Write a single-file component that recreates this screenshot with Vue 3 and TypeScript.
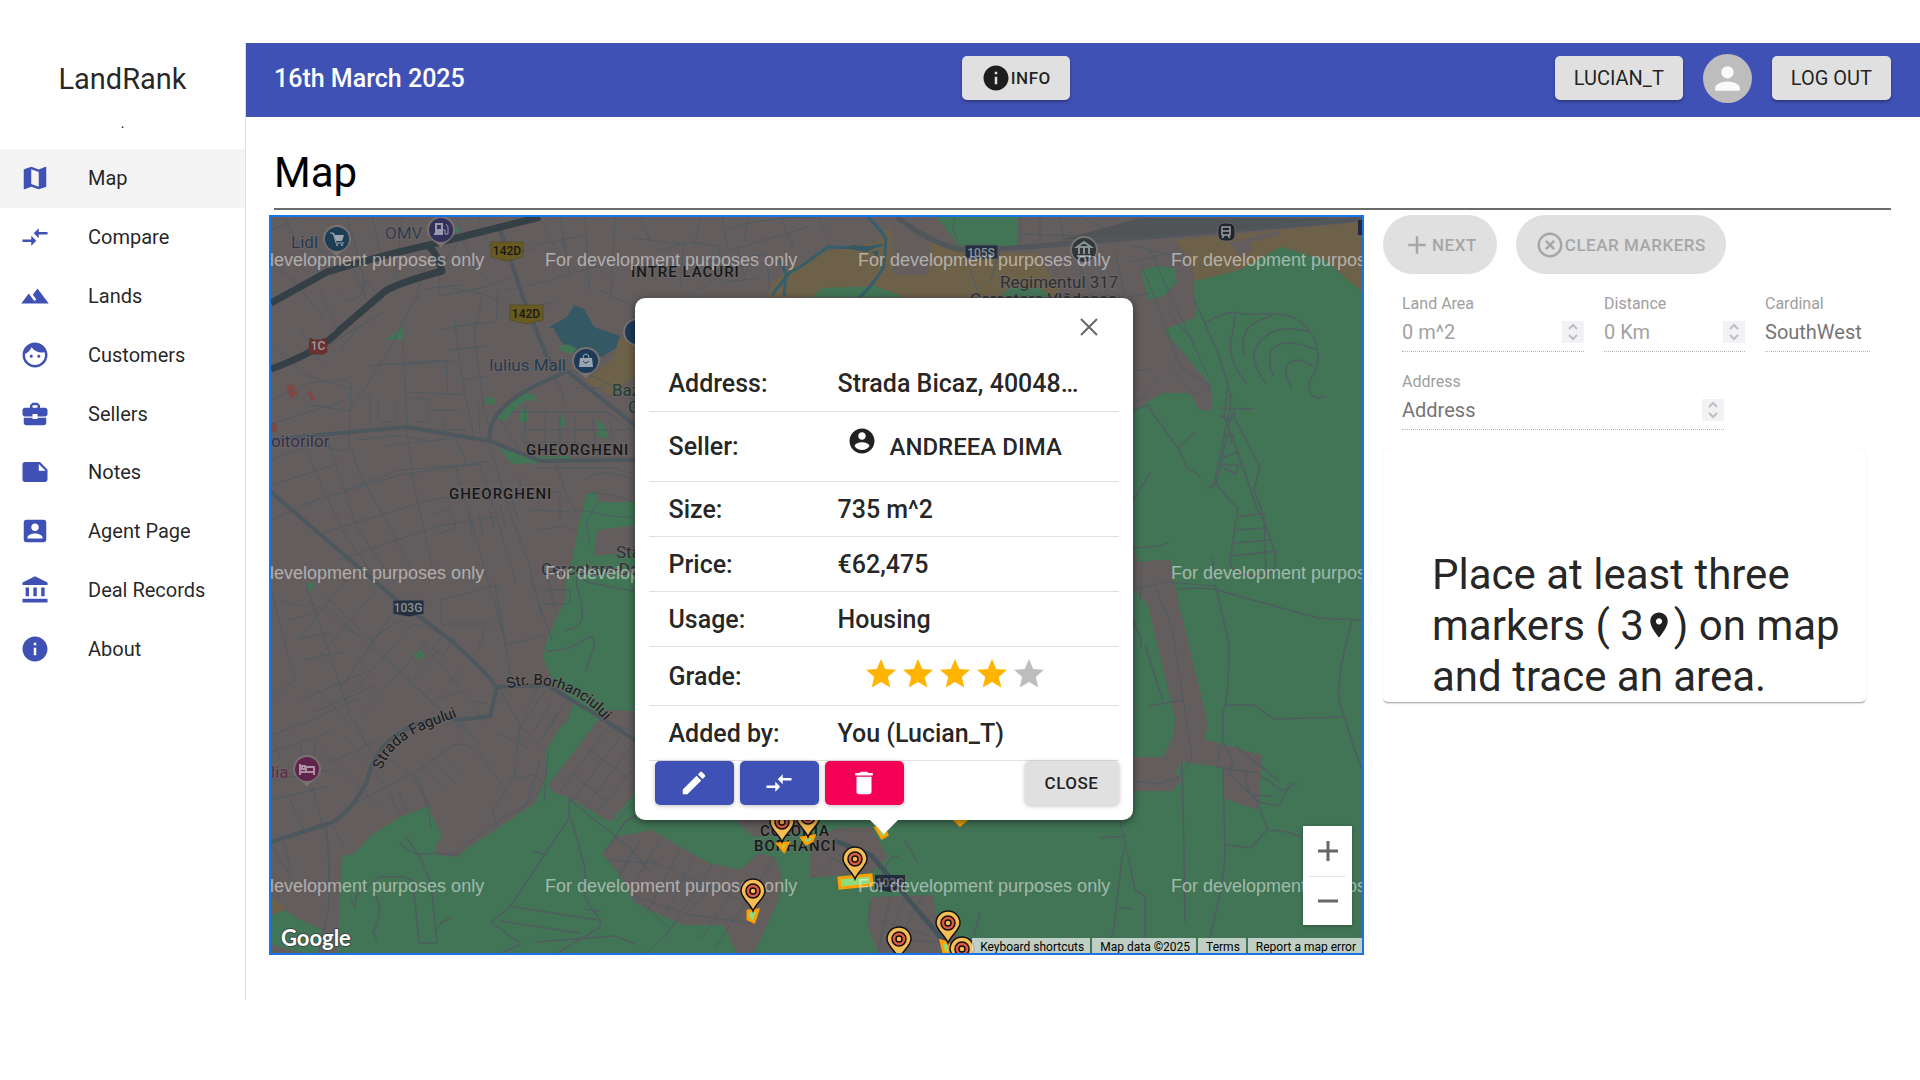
<script setup lang="ts">
interface NavItem { label: string; icon: string; active?: boolean }
interface Point { x: number; y: number }

const icons: Record<string, string> = {
  map: 'M20.5 3l-.16.03L15 5.1 9 3 3.36 4.9c-.21.07-.36.25-.36.48V20.5c0 .28.22.5.5.5l.16-.03L9 18.9l6 2.1 5.64-1.9c.21-.07.36-.25.36-.48V3.5c0-.28-.22-.5-.5-.5zM15 19l-6-2.11V5l6 2.11V19z',
  compare: 'M9.01 14H2v2h7.01v3L13 15l-3.99-4v3zm5.98-1v-3H22V8h-7.01V5L11 9l3.99 4z',
  lands: 'M14 6l-3.75 5 2.85 3.8-1.6 1.2C9.81 13.75 7 10 7 10l-6 8h22L14 6z',
  face: 'M9 11.75c-.69 0-1.25.56-1.25 1.25s.56 1.25 1.25 1.25 1.25-.56 1.25-1.25-.56-1.25-1.25-1.25zm6 0c-.69 0-1.25.56-1.25 1.25s.56 1.25 1.25 1.25 1.25-.56 1.25-1.25-.56-1.25-1.25-1.25zM12 2C6.48 2 2 6.48 2 12s4.48 10 10 10 10-4.48 10-10S17.52 2 12 2zm0 18c-4.41 0-8-3.59-8-8 0-.29.02-.58.05-.86 2.36-1.05 4.23-2.98 5.21-5.37C11.07 8.33 14.05 10 17.42 10c.78 0 1.53-.09 2.25-.26.21.71.33 1.47.33 2.26 0 4.41-3.59 8-8 8z',
  briefcase: 'M10 16v-1H3.01L3 19c0 1.11.89 2 2 2h14c1.11 0 2-.89 2-2v-4h-7v1h-4zm10-9h-4.01V5l-2-2h-4l-2 2v2H4c-1.1 0-2 .9-2 2v3c0 1.11.89 2 2 2h6v-2h4v2h6c1.1 0 2-.9 2-2V9c0-1.1-.9-2-2-2zm-6 0h-4V5h4v2z',
  note: 'M22 10l-6-6H4c-1.1 0-2 .9-2 2v12.01c0 1.1.9 1.99 2 1.99l16-.01c1.1 0 2-.89 2-1.99v-8zm-7-4.5l5.5 5.5H15V5.5z',
  accountBox: 'M3 5v14c0 1.1.89 2 2 2h14c1.1 0 2-.9 2-2V5c0-1.1-.9-2-2-2H5c-1.11 0-2 .9-2 2zm12 4c0 1.66-1.34 3-3 3s-3-1.34-3-3 1.34-3 3-3 3 1.34 3 3zm-9 8c0-2 4-3.1 6-3.1s6 1.1 6 3.1v1H6v-1z',
  bank: 'M4.5 10v7h2.7v-7zm6.2 0v7h2.7v-7zM2 22h20v-3H2v3zM17 10v7h2.700v-7zM12 1L2 6v2h20V6z',
  info: 'M12 2C6.48 2 2 6.48 2 12s4.48 10 10 10 10-4.48 10-10S17.52 2 12 2zm1 15h-2v-6h2v6zm0-8h-2V7h2v2z',
  person: 'M12 12c2.21 0 4-1.79 4-4s-1.79-4-4-4-4 1.79-4 4 1.79 4 4 4zm0 2c-2.67 0-8 1.34-8 4v2h16v-2c0-2.66-5.33-4-8-4z',
  account: 'M12 2C6.48 2 2 6.48 2 12s4.480 10 10 10 10-4.480 10-10S17.52 2 12 2zm0 3c1.66 0 3 1.34 3 3s-1.34 3-3 3-3-1.34-3-3 1.34-3 3-3zm0 14.2c-2.5 0-4.71-1.28-6-3.22.03-1.99 4-3.08 6-3.08 1.99 0 5.97 1.09 6 3.08-1.29 1.94-3.5 3.22-6 3.22z',
  edit: 'M3 17.25V21h3.75L17.81 9.94l-3.75-3.75L3 17.25zM20.71 7.04c.39-.39.39-1.02 0-1.41l-2.34-2.34c-.39-.39-1.02-.39-1.41 0l-1.83 1.83 3.75 3.75 1.83-1.83z',
  trash: 'M6 19c0 1.1.9 2 2 2h8c1.1 0 2-.9 2-2V7H6v12zM19 4h-3.5l-1-1h-5l-1 1H5v2h14V4z',
  star: 'M12 17.27L18.18 21l-1.64-7.03L22 9.24l-7.19-.61L12 2 9.19 8.63 2 9.24l5.46 4.73L5.82 21z',
  place: 'M12 2C8.13 2 5 5.13 5 9c0 5.25 7 13 7 13s7-7.75 7-13c0-3.87-3.13-7-7-7zm0 9.5c-1.38 0-2.5-1.12-2.5-2.5s1.12-2.5 2.5-2.5 2.5 1.12 2.5 2.5-1.12 2.5-2.5 2.5z',
  add: 'M19 13h-6v6h-2v-6H5v-2h6V5h2v6h6v2z',
  clear: 'M14.59 8L12 10.59 9.41 8 8 9.41 10.59 12 8 14.59 9.41 16 12 13.41 14.59 16 16 14.59 13.41 12 16 9.41 14.59 8zM12 2C6.47 2 2 6.47 2 12s4.47 10 10 10 10-4.47 10-10S17.53 2 12 2zm0 18c-4.41 0-8-3.59-8-8s3.59-8 8-8 8 3.59 8 8-3.59 8-8 8z',
}

const nav: NavItem[] = [
  { label: 'Map', icon: 'map', active: true },
  { label: 'Compare', icon: 'compare' },
  { label: 'Lands', icon: 'lands' },
  { label: 'Customers', icon: 'face' },
  { label: 'Sellers', icon: 'briefcase' },
  { label: 'Notes', icon: 'note' },
  { label: 'Agent Page', icon: 'accountBox' },
  { label: 'Deal Records', icon: 'bank' },
  { label: 'About', icon: 'info' },
]

const grade = 4

const watermarks: Point[] = [266, 579, 892].flatMap((y) => [232, 545, 858, 1171].map((x) => ({ x, y })))

const pins: Point[] = [
  { x: 808, y: 817 },
  { x: 782, y: 822 },
  { x: 855, y: 859 },
  { x: 753, y: 891 },
  { x: 899, y: 939 },
  { x: 948, y: 923 },
  { x: 962, y: 949 },
]

const parcels: string[] = [
  '839,878 871,875 872,885 840,888',
  '748,911 758,910 754,922 748,919',
  '778,844 788,843 784,851',
  '802,838 814,836 812,841 806,844',
  '876,828 884,828 887,835 882,838',
  '955,820 966,820 960,825',
  '941,941 948,943 951,953 944,953',
]

const greens: string[] = [
  '342,857 355,853 371,835 400,817 428,806 433,818 442,835 435,848 437,855 457,857 468,848 535,803 546,777 545,752 562,725 567,723 574,702 553,680 543,658 548,637 565,600 567,570 572,562 578,528 583,507 587,493 597,492 598,502 660,502 1100,440 1133,410 1163,393 1190,393 1199,409 1212,411 1212,387 1164,330 1196,317 1194,281 1240,270 1281,247 1325,260 1362,292 1362,953 337,953 340,900',
  '271,916 285,910 300,920 322,929 318,953 300,953 271,944',
  '937,217 1018,217 1017,247 958,245',
  '812,297 822,288 875,286 905,297',
  '1141,270 1160,266 1175,268 1177,282 1164,296 1148,300',
  '386,340 403,327 403,339',
  '485,398 494,397 495,404 486,405',
  '497,418 510,404 525,392 535,396 523,402 510,414 506,421',
  '526,395 536,395 535,401 526,400',
  '520,410 528,409 528,422 520,422',
  '560,413 565,420 566,428 560,426',
  '598,420 606,427 607,438 598,437',
  '499,447 512,452 530,457 570,456 568,462 512,464',
  '306,582 316,584 309,593',
  '413,655 419,649 425,655 419,661',
  '998,297 1010,288 1040,288 1050,297',
  '450,228 462,228 460,232 450,233',
]

const builtUp: string[] = [
  '597,530 640,525 640,552 594,556',
  '605,710 660,712 700,780 635,793 610,822 568,797 553,792 548,785 600,718',
  '615,837 652,830 668,840 709,863 740,870 759,853 775,857 781,873 780,897 754,953 737,953 723,925 683,925 635,903 620,875 602,853',
  '730,815 800,815 800,832 754,837',
  '809,878 812,840 837,828 871,827 888,857 871,873',
  '871,897 933,895 936,913 974,953 878,953 868,927',
  '1133,547 1138,562 1170,559 1178,600 1200,690 1208,725 1204,739 1262,755 1258,810 1223,798 1223,767 1182,762 1175,772 1182,780 1172,791 1130,791 1130,757 1163,757 1173,737 1175,718 1148,605 1137,593 1130,590',
  '271,948 303,952 303,953 271,953',
]

const fields: string[] = [
  '892,225 876,242 823,252 790,268 773,282 768,297 1063,297 1037,253 963,252 930,242 928,275 893,275',
  '1175,240 1362,222 1362,292 1325,260 1281,247 1240,270 1194,281 1192,262',
  '585,381 612,360 620,338 636,330 636,375 610,395',
  '271,896 285,908 271,916',
]

/* Residential streets, grouped by city quarter */
const streets: string[] = [
  'M271 230L300 217M285 217l14 30 22 28M300 240l28 14M346 217l12 38M372 217l8 34M402 217l-3 32M455 217l6 12M478 217l12 30M560 217l10 60M585 217l4 74M615 217l-4 78',
  'M271 262l24 20 28 36M283 300l40-24M320 292l17 36M350 262l20 44M365 280l18 22M395 262l2 22M358 262q12 24 2 34t-22-4',
  'M460 240l-20 28-2 28 44-8 26-10M417 300q4-12 16-12l28-3M450 288l33 6 24 10M462 240l14 28 22 24-2 30-42 4M425 268l-10 32-13 22-8 20-26 42-18 25',
  'M508 290q40-8 60-16l60-16M518 310l38-8M500 262l42-18 40-8M540 217l20 42M571 268l-10-30M592 262l22 20M600 290l28 14',
  'M271 345l34 30 46 14M300 330l22 34M320 350l40-24M340 350l20-24 24-14M351 381l-2 65M366 366l80-6 2 34M403 340l4 90M403 365l50-4M407 392l60 3',
  'M454 318l8 60 12 60M482 298l-8 36 10 76 6 20M440 330l40-8M448 350l38-4M271 400l40-18 38-2M271 424l70-22 10-10M310 405l40 6',
  'M370 395v30M378 398v24h18v-22M412 398h16v24h-14M430 410h30M444 416v14h22M478 402l2 32M462 380l26-4',
  'M271 460l40-16 38 8M271 485l70-22M300 435l22 52 24 50 26 36M326 436l30 90 40 60M350 445l10 30 32 56 20 40M407 430l6 50 20 90M382 446l74-8 12 30M356 440l46-5 24 6',
  'M300 505l100-30 90-14M316 535l110-34 68-12M338 560l100-34 62-10M270 520l44-18M345 490l55-20 80-6',
  'M490 445l14 50 26 72 12 50M478 460l18 54 20 70M455 465l22 76 16 60M430 515l20-6 6 18-20 8M468 512l4 24M478 510l5 24M489 508l6 22M500 504l5 24M512 500l6 20',
  'M500 420l20 30M512 412h96l26 20M526 403l-2 40h56M545 412v34M560 412v32M575 416v28h60M592 418l4 34M610 420l4 32M526 430h106',
  'M548 375q14 8 16 28M560 368l38 10 30 18M575 388h30M536 468h80l20 8M556 464l10 30 12 20M520 474v24h24M540 492h20v30M530 510l46 2M584 480q20-14 50 0M588 493q24 0 48 10M580 510l30 6 26 2M590 546l-4-24 12-20M536 530l28-4 10 4',
  'M271 590l24 90-24 20M280 600l22 6M288 620l28-8M296 640l34-8M303 660l40-8M306 585l24 70 20 60 34 60M320 590l60 60 60 60 40 35M350 575l-50 62M376 590l-56 66',
  'M395 610l-56 80M412 625l-66 75M428 640l-66 75M440 650l-26 30M325 605l110 100 40 32M310 600l45 34M370 640l30-20 20 6M300 700l70-30M315 712l60-26M318 690l34 36',
  'M441 600v24h52M441 600l60-16M494 600l12 45M504 645l42-10M495 583l16 96M530 578l22 62M540 590h30v14h-28M546 575l10 35M485 627q-4 22-16 32M420 625l34 14 10 16',
  'M420 640l50 60 20 5M442 636l-10 12 12 12M454 640l-12 16M460 668l-8 14M436 698l26-6M455 714l10 14M470 705l16 18M500 690l22 38 26 24-4 50M537 687l-20 50 10 10',
  'M271 735l40-14 50-24M271 752l60-20M280 760l-6-20M300 745l4 16M271 780l60-10M271 800l58-14M290 800l14 30M316 740l-6 40 12 42 8 32-2 60-10 40M320 748l60 60M345 735l40 50',
  'M271 845l20 32M283 840l8 30M327 824l2 60M332 823l12 24M352 805l66-35 36-25q12-5 26 10l30 40M415 780l16 28M420 762l26 28M430 755l26 30M440 750l24 24M390 795l10 20M398 790l8 22M380 740l-50 22M390 760l30 20 10 40 1 8',
  'M520 726l-6 50-22 36 6 16M528 748l-34-16M540 760l-14 46-28 14M515 780l20-6 10 12-28 26M500 820l-50 36M560 712l-20 30M567 700l-24 34M553 700l-18 30M545 690l-16 26',
  'M612 722l-52 70M622 735l-50 66M635 742l-50 65M645 755l-50 60M655 780l-40 42M590 750l46 34M572 772l36 32M600 720l40 14',
  'M607 860l50 4M618 875l20-30M640 840l-24 44M660 840l-30 50 40 40M680 850l-34 64M694 858l-30 60M712 865l-46 70-20 18M726 872l-60 62M740 880l-40 60M775 858l-60 90M631 895l60 20 60 8M650 860l90 40',
  'M810 880l30-26 30 10M820 850l32 20M870 900l-2 24M890 898l-12 54M905 897l-20 50M922 896l-30 57M880 920l50 16M888 940l60 2',
  'M630 238l54 6-4 42M640 217l10 24M660 250l30-8 28 4 4 28-32 22M700 220l-6 26M722 217l6 34 80-24M748 217l-4 26M780 217l14 32M818 217l10 20M725 230q40-14 90-13M706 262l60-8 4 36M718 270l40-6M724 282l36-4M738 250l8 32',
  'M896 217l22 18M1020 217v26M1040 217v24M1060 217l4 24M1080 217l30 14M1020 234l60 2M955 217q-6 14 4 24M965 254l12 36M1000 252l-10 30M1078 262l14 34M1097 256l10 40M1115 252l10 44',
  'M1130 225l34 4M1148 217v20M1130 245l40 10M1130 262l36-8M1140 262l14 34 26 70 30 20-14 10-30-34M1148 246l60 130M1130 297l20-4M1166 310l28 32 M1133 370l16 0 8 10-16 20-12 0',
  'M1142 560l-2 40M1133 590l32-8 50 4M1156 588l16 40 14 90 6 40-12 18-20 8-27-3',
]

/* Forest tracks outside the city */
const tracks: string[] = [
  'M548 651q20 0 34-10t12 4l-8 26M565 630l10-2q12-6 4-34t8-12l50 10',
  'M400 842q8 14 26 12t34 2M405 835l16 24 10 24 6 60h-18l-6-62q-6-6-34-4-10 8-16 14-8 0-8 16l-4-6M373 890q10 16 4 34l-4 8 4 8M437 930l4-8 10-4',
  'M569 798v20l-60 90-18 14 30 22-20 9M533 851l14 4M571 818l14 50v30l16 24-2 6-40 24M508 906l90 14M500 921l80 12M535 942l80-6 20 8M584 909l18 3',
  'M570 800l60 48 20 24M605 852l20-30 10-6',
  'M1204 324q24-16 40-10l32 0q24 0 38 24 10 24-4 42-4 16 8 18l8-2M1235 314q-2 18-4 26-4 20 16 44M1244 357q-6-32 20-38l8-4M1266 384q-24-32 0-48 14-12 44-4M1273 376q-10-28 8-32 10-4 36 6M1292 388q-16-28 8-28l14 6',
  'M1194 300l24 52 12 40v16l-16 76-6 4 8-4 12 14 10 10-8 52q0 14 22 16t24-14q-2-22-20-56l-16-48-16-42 4-30 4 12M1220 408l34 1M1234 409v8M1219 416l12 4M1216 484l16-70 28 52-6 24 10 26 2 58M1228 436l6-1-5 11M1222 458l16-6 4 14-20-2M1220 466l16 8 2-8M1238 517l24-4M1236 530l30-2M1234 543l38-3M1231 556l46-5',
  'M1133 411l14-6 30 42 10 20 14 10M1179 447l8-8 8-6M1133 500l18-28M1133 548l28-2 8-4',
  'M1174 590q26-4 44 0l20 6 44 12 36 10 44 2M1215 584l14 60q0 50-6 68v30l10 20-4 12 30 28 20 4 12-22h6M1213 557v14l2 10M1352 620q-18 66-12 84l16 50 6 14M1225 705h30l18 14 72-2M1184 700l-36 6M1145 645l18 56',
  'M1182 762l2 90 1 70M1223 768l2 82q0 30-16 90l-2 13M1225 845l26 3 16-18q20 0 36 8M1246 770q-2 20 10 30l12 30M1221 743l-4 24 40 6 26 18 8-4M1235 745l44 36M1251 795l22 1',
  'M1120 821l6 26-4 10-8 70-6 26M1127 850l8 40 10 6v57M1100 838l26-2M1118 907l16 2M1133 620l8 20v8M905 840l12 22M980 912l-6 24M880 880q10-30 20-22',
]
</script>

<template>
  <div class="page">
    <aside class="sidebar">
      <h2 class="brand">LandRank</h2>
      <p class="dot">.</p>
      <nav class="nav">
        <a v-for="item in nav" :key="item.label" href="#" :class="['nav-item', { active: item.active }]">
          <svg class="icon" viewBox="0 0 24 24"><path :d="icons[item.icon]" /></svg>
          <span>{{ item.label }}</span>
        </a>
      </nav>
    </aside>

    <div class="main">
      <header class="topbar">
        <div class="date">16th March 2025</div>
        <button class="btn info-btn" type="button">
          <svg class="icon" viewBox="0 0 24 24"><path :d="icons.info" /></svg>INFO
        </button>
        <div class="user">
          <button class="btn large" type="button">LUCIAN_T</button>
          <span class="avatar"><svg viewBox="0 0 24 24"><path :d="icons.person" /></svg></span>
          <button class="btn large" type="button">LOG OUT</button>
        </div>
      </header>

      <section class="content">
        <h1 class="title">Map</h1>
        <div class="workspace">
          <div class="map">
            <svg class="map-canvas" viewBox="271 217 1091 736" preserveAspectRatio="xMidYMid slice">
              <defs>
                <path id="street-fagului" d="M382 770Q392 738 446 721L480 708" />
                <path id="street-borhanciului" d="M508 689Q554 674 596 711L620 736" />
                <g id="pin">
                  <path d="M0 20C-3 12-12 7-12 0A12 12 0 0 1 12 0C12 7 3 12 0 20z" fill="#f7bd55" stroke="#111" stroke-width="1.500" />
                  <circle r="7" fill="#e05a44" stroke="#111" stroke-width="1.500" />
                  <circle r="3" fill="#f7bd55" stroke="#111" stroke-width="1.500" />
                </g>
                <path id="poi" d="M0 18C-2 13-14 10-14 0A14 14 0 0 1 14 0C14 10 2 13 0 18z" fill="#77716f" />
              </defs>
              <rect x="271" y="217" width="1091" height="736" fill="#645d5d" />
              <polygon v-for="f in fields" :key="f" :points="f" fill="#6e614a" />
              <polygon v-for="g in greens" :key="g" :points="g" fill="#427556" />
              <polygon v-for="b in builtUp" :key="b" :points="b" fill="#645d5d" />
              <polygon points="1230,243 1280,230 1279,235 1248,243 1253,250 1240,258" fill="#645d5d" />
              <path d="M286 386l7-2 5 10-8 4zM307 393l4-2 4 8-3 2zM271 422l4 0 3 8-7 3z" fill="#804840" />

              <g class="streets">
                <path v-for="s in streets" :key="s" :d="s" stroke="#4e5a63" />
                <path v-for="t in tracks" :key="t" :d="t" stroke="#505c60" stroke-width="1.500" />
              </g>

              <g fill="none" stroke-linejoin="round">
                <path d="M271 440l79-8 57-5 83 14 50 20 96-1M490 440q-4-30 47-55l30-14M567 371l70 56M500 230l23 67 24 60 15 16M271 492l122 105 27 20q50 36 77 70l-7 29-30 4-13-3" stroke="#4d575e" stroke-width="4" />
                <path d="M497 687l50-2 53 32 36 24" stroke="#4d575e" stroke-width="4" />
                <path d="M447 717q-70 10-80 65-22 38-40 42l-56 18" stroke="#4d575e" stroke-width="4" />
                <path d="M833 840l38 15 76 90" stroke="#44525a" stroke-width="5" />
                <path d="M271 303l56-31q60-18 102-27l111-28M271 369q50-18 70-40l42-36q8-8 59-22-4-16-14-26" stroke="#353f46" stroke-width="7" />
                <path d="M897 217q30 24 60 32 30 2 116-6L1362 219" stroke="#51565a" stroke-width="5" />
                <path d="M1060 240l80-22h200l-160 16z" fill="#515457" />
                <path d="M868 217q14 14 18 22l-2 26q-4 12-24 32M882 245l-16 3-38-1-25 18-14 8-17 22M780 260l6 14-2 22" stroke="#355e6c" stroke-width="3" />
                <path d="M843 248l10-3 24 2-10 5zM872 252l7-2-2 8zM548 328l20-12 6-11 10 4 10 18 26 9-4 12-14 9-10-3-18-2q-12-4-20-24z" fill="#355865" />
                <path d="M560 347q6-6 17 2l-6 5-10-3z" fill="#427556" />
              </g>

              <g class="labels">
                <text x="291" y="248" fill="#27394d">Lidl</text>
                <text x="385" y="239" fill="#343a50">OMV</text>
                <text x="489" y="371" fill="#25394f">Iulius Mall</text>
                <text x="271" y="447" fill="#352f4c">oitorilor</text>
                <text x="271" y="778" fill="#5e2d49">lia</text>
                <text x="612" y="396" fill="#1e3d30">Baz</text>
                <text x="628" y="413" fill="#1e3d30">G</text>
                <text x="616" y="558">Sta</text>
                <text x="541" y="575">Cercetare-De</text>
                <text x="1000" y="288">Regimentul 317</text>
                <text x="970" y="305">Cercetare Vlădeasa</text>
              </g>
              <g class="districts">
                <text x="631" y="277">ÎNTRE LACURI</text>
                <text x="526" y="455">GHEORGHENI</text>
                <text x="449" y="499">GHEORGHENI</text>
                <text x="760" y="836">COLONIA</text>
                <text x="754" y="851">BORHANCI</text>
              </g>
              <g class="street-names">
                <text><textPath href="#street-fagului">Strada Fagului</textPath></text>
                <text><textPath href="#street-borhanciului">Str. Borhanciului</textPath></text>
              </g>

              <g class="shields">
                <path d="M491 242h32v15l-16 4-16-4zM510 305h33v15l-17 4-16-4z" fill="#685a20" stroke="#55502e" />
                <path d="M310 338l4 2h7l5-2 1 14-3 2h-13l-2-3z" fill="#6a3230" stroke="#5d3532" />
                <path d="M393 600h31v14l-15 3-16-3zM965 245h33v14h-33z" fill="#25303e" stroke="#555c64" />
                <path d="M875 875h30v14l-15 3-15-3zM1358 220h4v15h-4z" fill="#222c3a" />
                <text x="507" y="255" fill="#1a1914">142D</text>
                <text x="526" y="318" fill="#1a1914">142D</text>
                <text x="318" y="350" fill="#a19b9b">1C</text>
                <text x="408" y="612" fill="#8b9199">103G</text>
                <text x="981" y="257" fill="#8b9199">105S</text>
                <text x="890" y="887" fill="#666d78">103G</text>
              </g>

              <g>
                <use href="#poi" x="337" y="239" /><circle cx="337" cy="239" r="12" fill="#1d3e55" />
                <use href="#poi" x="441" y="230" /><circle cx="441" cy="230" r="12" fill="#34325a" />
                <use href="#poi" x="586" y="361" /><circle cx="586" cy="361" r="12" fill="#1d3a58" />
                <use href="#poi" x="637" y="332" /><circle cx="637" cy="332" r="12" fill="#1d3a58" />
                <use href="#poi" x="307" y="769" /><circle cx="307" cy="769" r="12" fill="#60234b" />
                <use href="#poi" x="1084" y="250" /><circle cx="1084" cy="250" r="12" fill="#31383b" />
                <rect x="1218" y="223" width="17" height="18" rx="6" fill="#20242b" stroke="#65676b" />
                <path d="M331 233h3l1 2h9l-2 6h-6l-2-6z" fill="#9da6ac" />
                <path d="M330 233h3l3 10h8" fill="none" stroke="#9da6ac" />
                <circle cx="337" cy="245" r="1" fill="#9da6ac" /><circle cx="342" cy="245" r="1" fill="#9da6ac" />
                <path d="M435 223h8v12h-9v-2h1zM437 225v4h4v-4z" fill="#9b9aac" fill-rule="evenodd" />
                <path d="M443 230h2v4h3v-7l-2-3" fill="none" stroke="#9b9aac" />
                <path d="M580 358h12l1 9h-14z" fill="#9ba5b0" />
                <path d="M583 358q0-4 3-4t3 4" fill="none" stroke="#9ba5b0" />
                <path d="M583 361q3 4 6 0" fill="none" stroke="#1d3a58" />
                <path d="M300 764v11M300 772h14v3M314 772v-5h-8v5M302 766h3v3h-3z" fill="none" stroke="#ad8ea3" stroke-width="2" />
                <path d="M1077 247l7-5 7 5zM1079 248v6M1084 248v6M1089 248v6M1077 256h14" fill="none" stroke="#8b9093" stroke-width="2" />
                <path d="M1222 227h8v8h-8zM1222 231h8M1222 238l2-2M1230 238l-2-2" fill="none" stroke="#9b9da0" stroke-width="1.500" />
              </g>

              <polygon v-for="p in parcels" :key="p" :points="p" fill="#8fdc7c" stroke="#ffa000" stroke-width="3" />
              <g class="watermark">
                <text v-for="w in watermarks" :key="`${w.x}-${w.y}`" :x="w.x" :y="w.y">For development purposes only</text>
              </g>
              <use v-for="p in pins" :key="`${p.x}-${p.y}`" href="#pin" :x="p.x" :y="p.y" />
              <text class="logo" x="281" y="946">Google</text>
            </svg>

            <div class="popup" role="dialog" aria-label="Land details">
              <button class="popup-x" type="button" aria-label="Close">
                <svg viewBox="0 0 24 24"><path d="M4 4L20 20M20 4L4 20" /></svg>
              </button>
              <table class="details">
                <tbody>
                  <tr><th scope="row">Address:</th><td>Strada Bicaz, 40048…</td></tr>
                  <tr class="seller-row">
                    <th scope="row">Seller:</th>
                    <td>
                      <a class="seller" href="#"><svg class="icon" viewBox="0 0 24 24"><path :d="icons.account" /></svg>ANDREEA DIMA</a>
                    </td>
                  </tr>
                  <tr><th scope="row">Size:</th><td>735 m^2</td></tr>
                  <tr><th scope="row">Price:</th><td>€62,475</td></tr>
                  <tr><th scope="row">Usage:</th><td>Housing</td></tr>
                  <tr class="grade-row">
                    <th scope="row">Grade:</th>
                    <td>
                      <div class="stars">
                        <svg v-for="n in 5" :key="n" :class="{ on: n <= grade }" viewBox="0 0 24 24"><path :d="icons.star" /></svg>
                      </div>
                    </td>
                  </tr>
                  <tr><th scope="row">Added by:</th><td>You (Lucian_T)</td></tr>
                </tbody>
              </table>
              <div class="actions">
                <button class="act" type="button" aria-label="Edit"><svg class="icon" viewBox="0 0 24 24"><path :d="icons.edit" /></svg></button>
                <button class="act" type="button" aria-label="Compare"><svg class="icon" viewBox="0 0 24 24"><path :d="icons.compare" /></svg></button>
                <button class="act danger" type="button" aria-label="Delete"><svg class="icon" viewBox="0 0 24 24"><path :d="icons.trash" /></svg></button>
                <button class="act close" type="button">CLOSE</button>
              </div>
            </div>

            <div class="zoom">
              <button type="button" aria-label="Zoom in"><svg viewBox="0 0 20 20"><path d="M0 10H20M10 0V20" /></svg></button>
              <button type="button" aria-label="Zoom out"><svg viewBox="0 0 20 20"><path d="M0 10H20" /></svg></button>
            </div>
            <div class="credits">
              <button type="button">Keyboard shortcuts</button>
              <span>Map data ©2025</span>
              <a href="#">Terms</a>
              <a href="#">Report a map error</a>
            </div>
          </div>

          <div class="panel">
            <div class="panel-actions">
              <button class="pill" type="button" disabled><svg class="icon" viewBox="0 0 24 24"><path :d="icons.add" /></svg>NEXT</button>
              <button class="pill" type="button" disabled><svg class="icon" viewBox="0 0 24 24"><path :d="icons.clear" /></svg>CLEAR MARKERS</button>
            </div>

            <form class="form">
              <div class="field area">
                <label for="area">Land Area</label>
                <div class="control">
                  <input id="area" type="text" value="0 m^2" class="faint" disabled />
                  <svg class="stepper" viewBox="0 0 22 22"><path d="M7 8l4-4 4 4M7 14l4 4 4-4" /></svg>
                </div>
              </div>
              <div class="field distance">
                <label for="distance">Distance</label>
                <div class="control">
                  <input id="distance" type="text" value="0 Km" class="faint" disabled />
                  <svg class="stepper" viewBox="0 0 22 22"><path d="M7 8l4-4 4 4M7 14l4 4 4-4" /></svg>
                </div>
              </div>
              <div class="field cardinal">
                <label for="cardinal">Cardinal</label>
                <div class="control"><input id="cardinal" type="text" value="SouthWest" disabled /></div>
              </div>
              <div class="field address">
                <label for="address">Address</label>
                <div class="control">
                  <input id="address" type="text" value="Address" disabled />
                  <svg class="stepper" viewBox="0 0 22 22"><path d="M7 8l4-4 4 4M7 14l4 4 4-4" /></svg>
                </div>
              </div>
            </form>

            <div class="hint">
              <p>Place at least three markers ( 3<svg class="icon" viewBox="0 0 24 24"><path :d="icons.place" /></svg>) on map and trace an area.</p>
            </div>
          </div>
        </div>
      </section>
    </div>
  </div>
</template>

<style>
body {
  background: #fff;
}
</style>

<style scoped>
* {
  box-sizing: border-box;
}
.page {
  display: flex;
  align-items: flex-start;
  padding-top: 43px;
  font-family: Roboto, "Noto Sans", sans-serif;
  font-size: 20px;
  color: rgba(0, 0, 0, 0.87);
}
h1, h2, p {
  margin: 0;
  font-weight: 400;
}
button, input {
  font-family: inherit;
}
.icon {
  width: 30px;
  height: 30px;
  fill: currentColor;
  flex: none;
}
.sidebar {
  flex: none;
  width: 246px;
  min-height: 957px;
  border-right: 1px solid #e0e0e0;
}
.brand {
  height: 72px;
  line-height: 72px;
  font-size: 29px;
  text-align: center;
}
.dot {
  height: 34px;
  line-height: 16px;
  font-size: 16px;
  text-align: center;
}
.nav {
  display: flex;
  flex-direction: column;
  height: 529px;
}
.nav-item {
  flex: 1;
  display: flex;
  align-items: center;
  gap: 38px;
  padding-left: 20px;
  color: inherit;
  text-decoration: none;
}
.nav-item .icon {
  fill: #3f51b5;
}
.nav-item.active {
  background: #f4f4f4;
}
.main {
  flex: 1;
  min-width: 0;
}
.topbar {
  display: flex;
  align-items: center;
  justify-content: space-between;
  height: 74px;
  padding: 0 29px 4px 28px;
  background: #3f51b5;
}
.date {
  padding-right: 12px;
  font-size: 25px;
  font-weight: 500;
  color: #fff;
}
.btn {
  display: flex;
  align-items: center;
  justify-content: center;
  height: 44px;
  padding: 0 19px;
  border: 0;
  border-radius: 5px;
  background: #e0e0e0;
  color: rgba(0, 0, 0, 0.87);
  box-shadow: 0 2px 3px rgba(0, 0, 0, 0.3);
  font-size: 17px;
  font-weight: 500;
  letter-spacing: 0.03em;
}
.btn.large {
  font-size: 20px;
  font-weight: 400;
  letter-spacing: normal;
}
.user {
  display: flex;
  align-items: center;
  gap: 20px;
}
.avatar {
  display: flex;
  align-items: center;
  justify-content: center;
  width: 49px;
  height: 49px;
  border-radius: 50%;
  background: #bdbdbd;
}
.avatar svg {
  width: 37px;
  height: 37px;
  fill: #fafafa;
}
.content {
  padding: 31px 29px 0 28px;
}
.title {
  height: 62px;
  line-height: 50px;
  font-size: 42px;
  color: #000;
  border-bottom: 2px solid #6b6b6b;
}
.workspace {
  display: flex;
  gap: 19px;
  margin: 5px 0 0 -5px;
}
.map {
  position: relative;
  flex: 1;
  min-width: 0;
  height: 740px;
  overflow: hidden;
  border: 2px solid #1a73e8;
}
.map-canvas {
  display: block;
  width: 100%;
  height: 100%;
}
.streets {
  fill: none;
  stroke-linejoin: round;
}
.labels, .districts, .street-names {
  fill: #2b3038;
  stroke: #746d6c;
  stroke-opacity: 0.5;
  stroke-width: 2px;
  paint-order: stroke;
  font-size: 17px;
}
.districts {
  fill: #15181a;
  font-size: 15px;
  font-weight: 500;
  letter-spacing: 1px;
}
.street-names {
  fill: #16191b;
  font-size: 15px;
}
.shields {
  font-size: 12px;
  font-weight: 500;
  text-anchor: middle;
}
.watermark {
  fill: rgba(255, 255, 255, 0.5);
  font-family: "Liberation Sans", Arial, sans-serif;
  font-size: 18px;
}
.logo {
  fill: #fff;
  stroke: #3a4a40;
  stroke-width: 2px;
  paint-order: stroke;
  font-family: Lato, sans-serif;
  font-size: 22px;
  font-weight: 700;
}
.popup {
  position: absolute;
  top: 81px;
  left: calc(50% - 182px);
  width: 498px;
  height: 522px;
  padding: 58px 14px 0;
  border-radius: 10px;
  background: #fff;
  box-shadow: 0 2px 9px rgba(0, 0, 0, 0.5);
}
.popup::after {
  content: "";
  position: absolute;
  top: 521px;
  left: 234px;
  border: 15px solid transparent;
  border-top: 15px solid #fff;
  border-bottom: 0;
}
.popup-x {
  position: absolute;
  top: 17px;
  right: 32px;
  width: 24px;
  height: 24px;
  padding: 0;
  border: 0;
  background: none;
}
.popup-x svg {
  display: block;
  width: 24px;
  height: 24px;
  fill: none;
  stroke: #666;
  stroke-width: 2px;
}
.details {
  width: 100%;
  table-layout: fixed;
  border-collapse: collapse;
  font-size: 25px;
  line-height: 30px;
}
.details tr {
  height: 55px;
}
.details .seller-row {
  height: 70px;
}
.details .grade-row {
  height: 59px;
}
.details th, .details td {
  padding: 2px 0 0 20px;
  border-bottom: 1px solid #e0e0e0;
  font-weight: 500;
  text-align: left;
  white-space: nowrap;
}
.details th {
  width: 169px;
}
.seller {
  display: flex;
  align-items: center;
  gap: 13px;
  padding-left: 9px;
  color: inherit;
  font-size: 24px;
  text-decoration: none;
}
.seller .icon {
  margin-bottom: 12px;
}
.stars {
  display: flex;
  gap: 1px;
  padding: 0 0 6px 25px;
}
.stars svg {
  width: 36px;
  height: 36px;
  fill: #bdbdbd;
}
.stars svg.on {
  fill: #ffb400;
}
.actions {
  display: flex;
  gap: 6px;
  padding-left: 6px;
}
.act {
  display: flex;
  align-items: center;
  justify-content: center;
  width: 79px;
  height: 44px;
  padding: 0;
  border: 0;
  border-radius: 5px;
  background: #3f51b5;
  color: #fff;
  box-shadow: 0 1px 4px rgba(0, 0, 0, 0.25);
  font-size: 17px;
  font-weight: 500;
  letter-spacing: 0.03em;
}
.act.danger {
  background: #f50057;
}
.act.close {
  width: 94px;
  margin-left: auto;
  background: #e0e0e0;
  color: rgba(0, 0, 0, 0.87);
}
.zoom {
  position: absolute;
  right: 10px;
  bottom: 28px;
  display: flex;
  flex-direction: column;
  width: 49px;
  padding: 0 6px;
  background: #fff;
  box-shadow: 0 1px 4px rgba(0, 0, 0, 0.3);
}
.zoom button {
  height: 50px;
  padding: 0;
  border: 0;
  background: none;
}
.zoom button + button {
  height: 49px;
  border-top: 1px solid #e6e6e6;
}
.zoom svg {
  display: block;
  width: 20px;
  height: 20px;
  margin: 0 auto;
  fill: none;
  stroke: #666;
  stroke-width: 3px;
}
.credits {
  position: absolute;
  right: 0;
  bottom: 0;
  display: flex;
  gap: 2px;
}
.credits > * {
  height: 15px;
  padding: 0 6px 0 8px;
  border: 0;
  background: rgba(245, 245, 245, 0.7);
  color: #000;
  font-size: 12px;
  line-height: 19px;
  text-decoration: none;
  white-space: nowrap;
}
.panel {
  flex: none;
  width: 508px;
}
.panel-actions {
  display: flex;
  gap: 19px;
}
.pill {
  display: flex;
  align-items: center;
  height: 59px;
  padding: 0 20px 0 19px;
  border: 0;
  border-radius: 30px;
  background: #e0e0e0;
  color: #a6a6a6;
  font-size: 17px;
  font-weight: 500;
  letter-spacing: 0.03em;
}
.form {
  display: flex;
  flex-wrap: wrap;
  gap: 19px 20px;
  padding: 19px 0 0 19px;
}
.field label {
  display: block;
  height: 20px;
  line-height: 21px;
  font-size: 16px;
  color: #9e9e9e;
}
.control {
  display: flex;
  align-items: center;
  height: 39px;
  border-bottom: 1px dotted #b5b5b5;
}
.control input {
  flex: 1;
  width: 100%;
  min-width: 0;
  padding: 0;
  border: 0;
  background: none;
  color: #757575;
  font-size: 20px;
}
.control input.faint {
  color: #a2a2a2;
}
.stepper {
  flex: none;
  width: 22px;
  height: 22px;
  background: #f2f2f4;
  fill: none;
  stroke: #bdbdc2;
  stroke-width: 2px;
}
.area { width: 182px; }
.distance { width: 141px; }
.cardinal { width: 105px; }
.address { width: 322px; }
.hint {
  width: 483px;
  height: 253px;
  margin-top: 19px;
  padding: 100px 20px 0 49px;
  border-radius: 5px;
  box-shadow: 0 2px 2px -1px rgba(0, 0, 0, 0.4), 0 0 1px rgba(0, 0, 0, 0.15);
  font-size: 42px;
  line-height: 51px;
}
.hint .icon {
  vertical-align: baseline;
}
</style>
